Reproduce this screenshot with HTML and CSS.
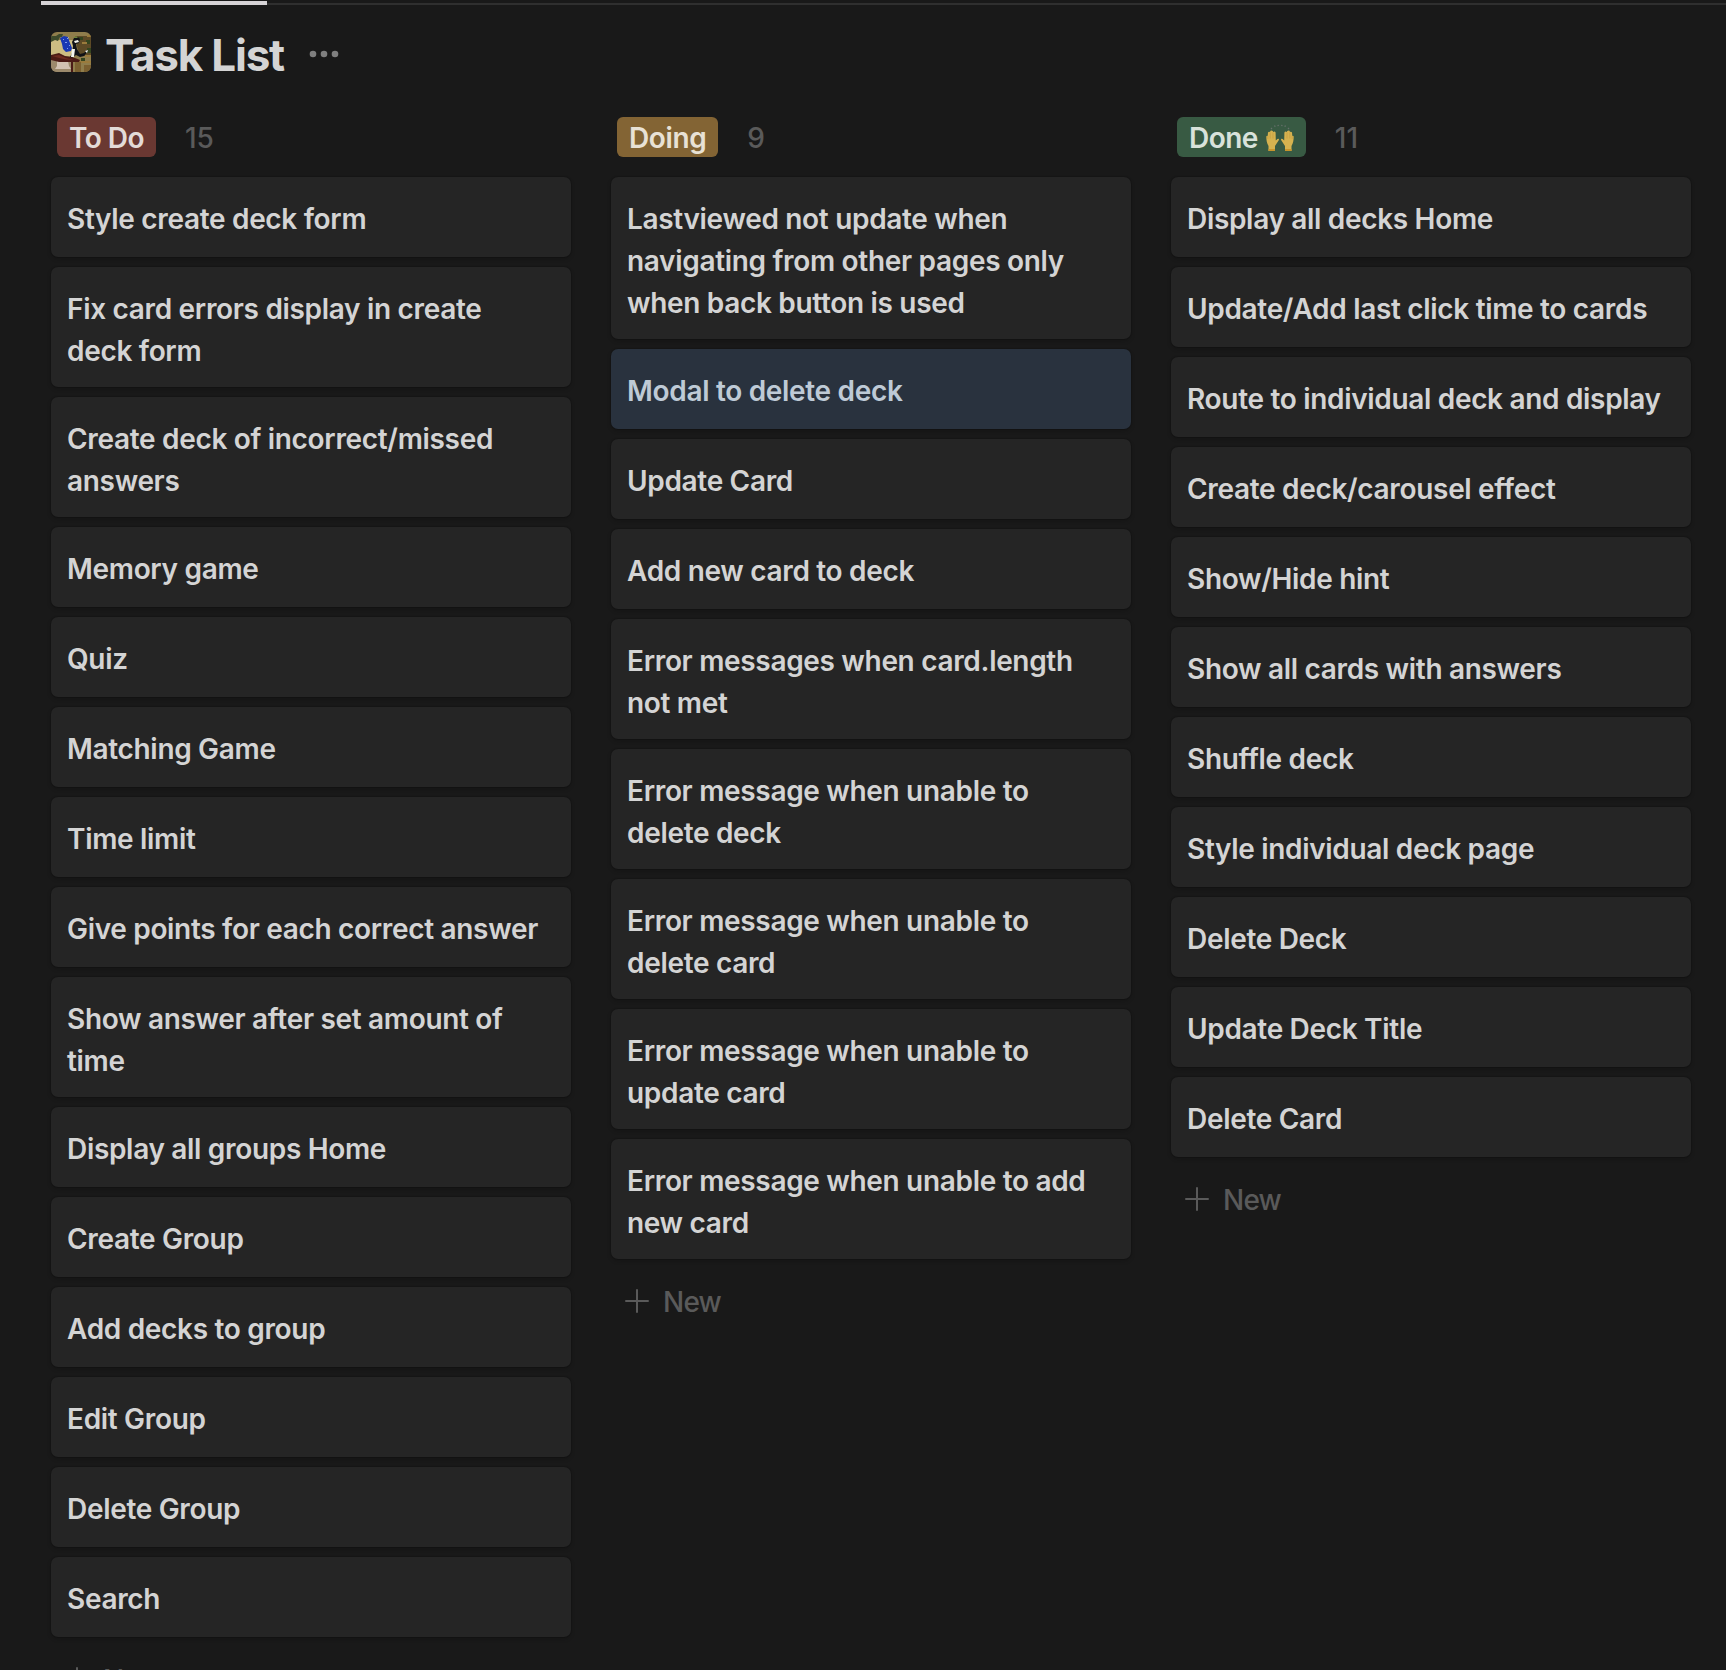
FILE: index.html
```html
<!DOCTYPE html>
<html lang="en">
<head>
<meta charset="utf-8">
<title>Task List</title>
<link rel="stylesheet" href="styles.css">
</head>
<body>
<div class="tabs"><div class="tab-active"></div></div>
<header class="header">
  <svg class="cover" viewBox="0 0 40 40">
    <rect width="40" height="40" fill="#8f7d4c"/>
    <path d="M0 8h10v-3h8v3h6v16H0z" fill="#cdbd83"/>
    <path d="M0 4h5l3-2h4l-1 3H9L7 9 4 8 0 10z" fill="#3d4a2b"/>
    <path d="M24 4h16v20H28z" fill="#5d4a26"/>
    <path d="M28 5h4v3h-4zM35 8h4v4h-4zM36 16h4v5h-4zM30 26h4v4h-4z" fill="#34451f"/>
    <path d="M31 10h5v2h-5zM34 23h6v2h-6zM28 29h12v2H28zM36 3h4v2h-4z" fill="#9a7b3c"/>
    <path d="M24 30h6v10h-6zM33 33h7v7h-7z" fill="#7b6030"/>
    <path d="M0 28h21v12H0z" fill="#9c8a6c"/>
    <path d="M6 29h11l1 5 2 3H4l2-3z" fill="#d2c3b3"/>
    <path d="M9 6l4-2 4 1 2 6 2 5-1 3-5 1-3-3-1-5z" fill="#1838b4"/>
    <path d="M12 7h1v1h-1zM16 6h1v1h-1zM14 10h2v1h-2zM18 13h1v1h-1zM16 16h1v1h-1z" fill="#809cf0"/>
    <path d="M21 10l2-4 4-1 2 2-1 4-3 1 1 5 3 5 4-1 3-3 1 1-4 5-4 1-4-2-4 3-3 1 3-6 1-7z" fill="#101216"/>
    <path d="M23 9l4-1 1 2-4 1zM21 17h3l-1 8h-3zM34 19l3-1-1 3z" fill="#f5f5ee"/>
    <path d="M22 6l3-2 2 2z" fill="#70863d"/>
    <path d="M0 23l8-2 6 3 10 2 5 2-1 2h-6v10h-2V30H8l-8-2z" fill="#4b1b16"/>
    <path d="M1 24l7-1 7 3 8 2-8-.5L8 26z" fill="#6d2b20"/>
  </svg>
  <h1 class="title">Task List</h1>
  <svg class="more" viewBox="0 0 30 8"><circle cx="4" cy="4" r="3.3"/><circle cx="15" cy="4" r="3.3"/><circle cx="26" cy="4" r="3.3"/></svg>
</header>
<main class="board">
  <section class="column">
    <div class="column-head"><span class="tag tag-red">To Do</span><span class="count">15</span></div>
    <div class="card">Style create deck form</div>
    <div class="card">Fix card errors display in create<br>deck form</div>
    <div class="card">Create deck of incorrect/missed<br>answers</div>
    <div class="card">Memory game</div>
    <div class="card">Quiz</div>
    <div class="card">Matching Game</div>
    <div class="card">Time limit</div>
    <div class="card">Give points for each correct answer</div>
    <div class="card">Show answer after set amount of<br>time</div>
    <div class="card">Display all groups Home</div>
    <div class="card">Create Group</div>
    <div class="card">Add decks to group</div>
    <div class="card">Edit Group</div>
    <div class="card">Delete Group</div>
    <div class="card">Search</div>
    <div class="new"><svg class="plus" viewBox="0 0 24 24"><path d="M12 1v22M1 12h22"/></svg>New</div>
  </section>
  <section class="column">
    <div class="column-head"><span class="tag tag-yellow">Doing</span><span class="count">9</span></div>
    <div class="card">Lastviewed not update when<br>navigating from other pages only<br>when back button is used</div>
    <div class="card card-selected">Modal to delete deck</div>
    <div class="card">Update Card</div>
    <div class="card">Add new card to deck</div>
    <div class="card">Error messages when card.length<br>not met</div>
    <div class="card">Error message when unable to<br>delete deck</div>
    <div class="card">Error message when unable to<br>delete card</div>
    <div class="card">Error message when unable to<br>update card</div>
    <div class="card">Error message when unable to add<br>new card</div>
    <div class="new"><svg class="plus" viewBox="0 0 24 24"><path d="M12 1v22M1 12h22"/></svg>New</div>
  </section>
  <section class="column">
    <div class="column-head"><span class="tag tag-green">Done
      <svg class="hands" viewBox="0 0 28 28">
        <g id="hand"><path d="M2.500 27V22C.8 19 .3 16 .3 12.500Q.8 11.300 1.700 12L2 8.500Q2.800 7.200 4 8L4.500 6.800Q5.600 5.900 6.700 7L7.300 8Q8.800 7 9.600 8.400L9.800 16.500 11.400 15Q13.400 14.300 12.900 16L9 22V27Z" fill="#d6b24f"/><path d="M2.500 25h6.500v2H2.500z" fill="#c8942c"/><path d="M1.800 12v3M4.200 8.500v6M7 8.500v6" stroke="#bd9238" stroke-width=".5"/></g>
        <use href="#hand" transform="matrix(-1 0 0 1 28 0)"/>
        <path d="M5 4l1 1M8.500 1.500l.7 1.300M12 .8l.3 1.400M16 .8l-.3 1.400M19.500 1.500l-.7 1.300M23 4l-1 1" stroke="#65706a" stroke-width="1.300"/>
      </svg></span><span class="count">11</span></div>
    <div class="card">Display all decks Home</div>
    <div class="card">Update/Add last click time to cards</div>
    <div class="card">Route to individual deck and display</div>
    <div class="card">Create deck/carousel effect</div>
    <div class="card">Show/Hide hint</div>
    <div class="card">Show all cards with answers</div>
    <div class="card">Shuffle deck</div>
    <div class="card">Style individual deck page</div>
    <div class="card">Delete Deck</div>
    <div class="card">Update Deck Title</div>
    <div class="card">Delete Card</div>
    <div class="new"><svg class="plus" viewBox="0 0 24 24"><path d="M12 1v22M1 12h22"/></svg>New</div>
  </section>
</main>
</body>
</html>
```

FILE: styles.css
```css
* { box-sizing: border-box; }
html { overflow: hidden; }
body {
  margin: 0;
  height: 1670px;
  overflow: hidden;
  background: #191919;
  color: #d4d4d4;
  font-family: Inter, "Liberation Sans", sans-serif;
  font-size: 28px;
  line-height: 42px;
}
.tabs { height: 5px; margin-left: 41px; padding-top: 1px; background: linear-gradient(#2f2f2f, #2f2f2f) 0 3px / 100% 2px no-repeat; }
.tab-active { width: 226px; height: 4px; background: #d6d3d6; }
.header { display: flex; align-items: center; height: 112px; padding: 0 51px 17px; }
.cover { width: 40px; height: 40px; border-radius: 6px; margin-top: -1px; }
.title { margin: 4px 0 0 14px; font-size: 44px; line-height: 56px; font-weight: 700; letter-spacing: -1.2px; }
.more { width: 30px; height: 8px; margin: 2px 0 0 25px; fill: #7f7f7f; }
.board { display: grid; grid-template-columns: repeat(3, 520px); gap: 40px; padding-left: 51px; align-items: start; }
.column { display: flex; flex-direction: column; gap: 10px; }
.column-head { display: flex; align-items: center; height: 40px; margin: 0 6px 10px; }
.tag { display: flex; align-items: center; height: 40px; padding: 2px 12px 0; border-radius: 6px; font-weight: 600; letter-spacing: -.55px; white-space: nowrap; color: #e3dbd8; }
.tag-red { background: #6a3832; }
.tag-yellow { background: #836434; color: #e8e1d5; letter-spacing: -.4px; }
.tag-green { background: #385a43; color: #d8e2db; }
.hands { width: 28px; height: 28px; margin-left: 8px; }
.count { margin: 2px 0 0 29px; font-weight: 500; color: #5a5a5a; }
.card {
  min-height: 80px;
  padding: 21px 16px 15px;
  border-radius: 7px;
  background: #252525;
  box-shadow: 0 2px 4px rgba(0, 0, 0, .2), 0 0 0 1px rgba(0, 0, 0, .1);
  font-weight: 600;
  letter-spacing: -.32px;
  white-space: nowrap;
}
.card-selected { background: #29323e; color: #becad6; }
.new { display: flex; align-items: center; height: 66px; padding: 0 14px; font-weight: 500; letter-spacing: -.8px; color: #5a5a5a; }
.plus { width: 24px; height: 24px; margin: -2px 14px 0 0; fill: none; stroke: #5a5a5a; stroke-width: 2; stroke-linecap: round; }
```
